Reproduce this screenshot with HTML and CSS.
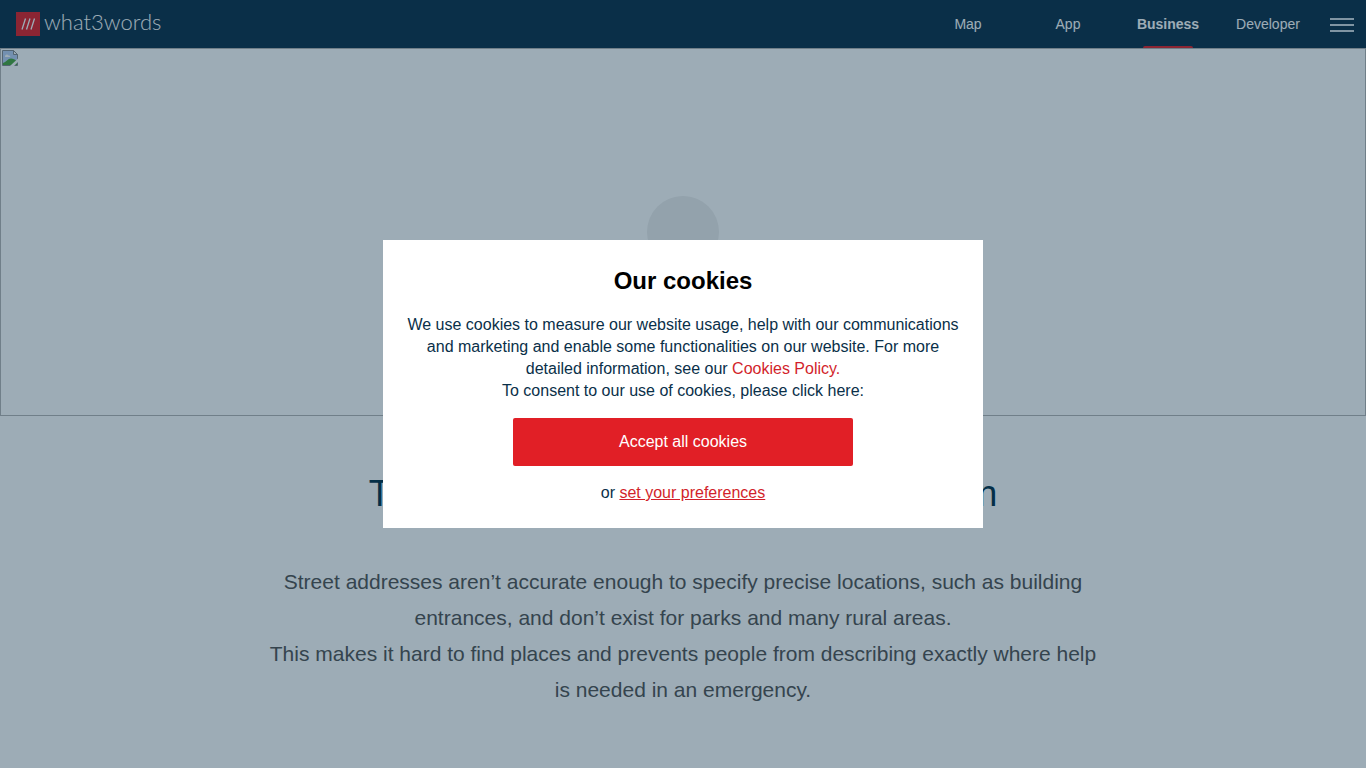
FILE: index.html
```html
<!DOCTYPE html>
<html lang="en">
<head>
  <meta charset="UTF-8">
  <meta name="viewport" content="width=device-width, initial-scale=1.0">
  <title>what3words for business</title>
  <link rel="stylesheet" href="styles.css">
</head>
<body>
  <header class="header">
    <a class="logo" href="#">
      <svg class="logo-icon" viewBox="0 0 24 24" aria-hidden="true">
        <rect width="24" height="24" fill="#e11f26"/>
        <path d="M9.500 6.500 6 17.500M14 6.500l-3.500 11M18.500 6.500l-3.500 11" stroke="#fff" stroke-width="1.300" fill="none"/>
      </svg>
      <span class="logo-text">what3words</span>
    </a>
    <nav class="nav">
      <a href="#">Map</a>
      <a href="#">App</a>
      <a class="active" href="#">Business</a>
      <a href="#">Developer</a>
    </nav>
    <button class="burger" aria-label="Menu">
      <span></span>
      <span></span>
      <span></span>
    </button>
  </header>

  <main>
    <section class="hero">
      <svg class="hero-icon" viewBox="0 0 16 16" aria-hidden="true">
        <path d="M.5 .5h11l4 4v11H.5z" fill="#b9d0f5"/>
        <path d="M3 6.500c0-2 2.500-3 3.500-1 2-.5 2.500 1.500 1 1.500H3z" fill="#fff"/>
        <path d="M1 15v-2c3-1 5-4.500 8-4.500 2 0 4 1 6 2.500v4z" fill="#4aa53c"/>
        <path d="M.5 15.500V.5h11l4 4v11z" fill="none" stroke="#85898e"/>
        <path d="M11.500 .5v4h4z" fill="#fff" stroke="#85898e"/>
        <path d="M16 8.500 8 16h4l4-4z" fill="#fff"/>
      </svg>
      <button class="play" aria-label="Play video"></button>
    </section>

    <section class="intro">
      <h1>The need for a precise location solution</h1>
      <p>Street addresses aren’t accurate enough to specify precise locations, such as building entrances, and don’t exist for parks and many rural areas.<br>
      This makes it hard to find places and prevents people from describing exactly where help is needed in an emergency.</p>
    </section>
  </main>

  <div class="overlay">
    <div class="cookies" role="dialog" aria-labelledby="cookiesTitle">
      <h2 id="cookiesTitle">Our cookies</h2>
      <p>We use cookies to measure our website usage, help with our communications and marketing and enable some functionalities on our website. For more detailed information, see our <a href="#">Cookies Policy.</a><br>
      To consent to our use of cookies, please click here:</p>
      <button class="btn">Accept all cookies</button>
      <p>or <a class="preferences" href="#">set your preferences</a></p>
    </div>
  </div>
</body>
</html>
```
FILE: styles.css
```css
:root {
  --navy: #0a3049;
  --red: #e11f26;
  --text: #525252;
}
* {
  box-sizing: border-box;
}
body {
  margin: 0;
  background-color: #fff;
  color: var(--text);
  font-family: "Liberation Sans", Arial, sans-serif;
}
.header {
  display: flex;
  align-items: center;
  height: 48px;
  padding: 0 12px 0 16px;
  background-color: var(--navy);
}
.logo {
  display: flex;
  align-items: center;
  gap: 4px;
  margin-right: auto;
  color: #fff;
  text-decoration: none;
}
.logo-icon {
  width: 24px;
  height: 24px;
}
.logo-text {
  font-family: Lato, sans-serif;
  font-size: 22px;
  font-weight: 300;
  line-height: 24px;
  padding-bottom: 4px;
}
.nav {
  display: flex;
  height: 100%;
}
.nav a {
  position: relative;
  width: 100px;
  color: #fff;
  font-size: 14px;
  line-height: 48px;
  text-align: center;
  text-decoration: none;
}
.nav .active {
  font-weight: bold;
}
.nav .active::after {
  content: "";
  position: absolute;
  left: 25px;
  right: 25px;
  bottom: 0;
  height: 2px;
  border-radius: 2px 2px 0 0;
  background-color: var(--red);
}
.burger {
  display: flex;
  flex-direction: column;
  gap: 4px;
  width: 24px;
  margin-left: 12px;
  padding: 2px 0 0;
  border: none;
  background: none;
  cursor: pointer;
}
.burger span {
  height: 2px;
  background-color: #cfd9df;
}
.hero {
  position: relative;
  display: flex;
  align-items: center;
  justify-content: center;
  height: 368px;
  border: 1px solid #b4b4b4;
}
.hero-icon {
  position: absolute;
  top: 1px;
  left: 1px;
  width: 16px;
  height: 16px;
}
.play {
  width: 72px;
  height: 72px;
  border: none;
  border-radius: 50%;
  background-color: #eee;
}
.intro {
  max-width: 840px;
  margin: 0 auto;
  padding: 56px 0 60px;
  text-align: center;
}
.intro h1 {
  margin: 0 0 48px;
  color: #003049;
  font-size: 36px;
  font-weight: normal;
  line-height: 44px;
}
.intro p {
  margin: 0;
  font-size: 21px;
  line-height: 36px;
}
.overlay {
  position: fixed;
  top: 0;
  right: 0;
  bottom: 0;
  left: 0;
  display: flex;
  align-items: center;
  justify-content: center;
  background-color: rgba(10, 48, 73, 0.4);
}
.cookies {
  max-width: 600px;
  padding: 24px;
  background-color: #fff;
  color: var(--navy);
  text-align: center;
}
.cookies h2 {
  margin: 0 0 16px;
  color: #000;
  font-size: 24px;
  line-height: 34px;
}
.cookies p {
  margin: 0;
  font-size: 16px;
  line-height: 22px;
}
.cookies a {
  color: #d21f2b;
  text-decoration: none;
}
.cookies .preferences {
  text-decoration: underline;
}
.btn {
  width: 340px;
  max-width: 100%;
  height: 48px;
  margin: 16px 0;
  border: none;
  border-radius: 2px;
  background-color: var(--red);
  color: #fff;
  font-family: inherit;
  font-size: 16px;
  cursor: pointer;
}
```
